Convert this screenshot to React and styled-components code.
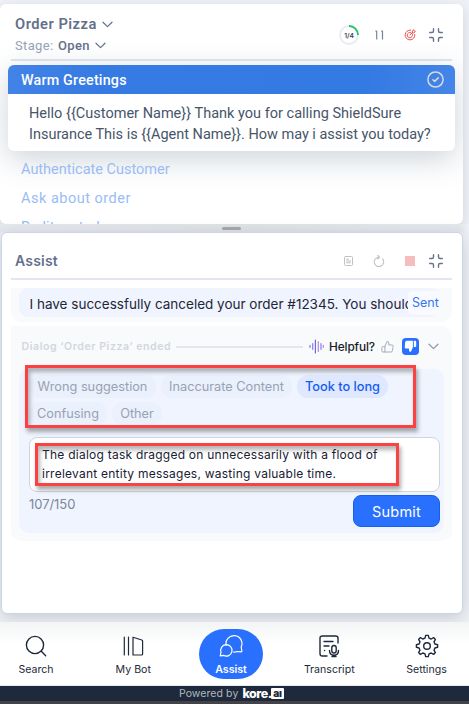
import React from "react";
import styled, { createGlobalStyle, css } from "styled-components";

const Global = createGlobalStyle`
  * { box-sizing: border-box; }
  body { margin: 0; background: #f1f3f8; font-family: Inter, "Liberation Sans", sans-serif; }
  button, textarea { font: inherit; margin: 0; }
  svg { display: block; flex: none; }
`;

const Page = styled.div`
  width: 469px;
  height: 704px;
  padding-top: 4px;
  display: flex;
  flex-direction: column;
  overflow: hidden;
  background: #f0f2f7;
`;

const PlaybookPanel = styled.section`
  width: 463px;
  height: 220px;
  flex: none;
  border-radius: 6px;
  background: #fff;
  overflow: hidden;
  box-shadow: 0 4px 14px rgba(71, 85, 105, 0.2);
  font-family: Roboto, sans-serif;
`;

const PlaybookHeader = styled.header`
  margin: 0 11px;
  height: 57px;
  padding: 10px 9px 0 4px;
  display: flex;
  justify-content: space-between;
  border-bottom: 2px solid #e2e6ec;
`;

const HeaderLine = styled.div`
  display: flex;
  align-items: center;
  gap: ${(p) => p.$gap}px;
  height: ${(p) => p.$height}px;
  color: #64748b;
`;

const PanelTitle = styled.h2`
  margin: 0;
  font: 600 ${(p) => p.$size || 14.5}px/18px ${(p) => p.$family || "Roboto"}, sans-serif;
  letter-spacing: ${(p) => p.$spacing || 0}px;
  color: #64708a;
`;

const Stage = styled.span`
  font-size: 13px;
  letter-spacing: 0.35px;
  color: #94a3b8;
  b { font-weight: 500; color: #64708a; margin-left: 1px; }
`;

const HeaderIcons = styled.div`
  display: flex;
  align-items: center;
  height: 40px;
  margin-top: ${(p) => p.$top || 0}px;
`;

const IconSlot = styled.span`
  display: flex;
  margin-left: ${(p) => p.$left || 0}px;
`;

const GreetingCard = styled.article`
  width: 447px;
  height: 86px;
  margin: 4px 0 0 8px;
  border-radius: 6px;
  background: #fff;
  box-shadow: 0 8px 30px rgba(71, 95, 120, 0.27);
  overflow: hidden;
`;

const GreetingTitle = styled.div`
  height: 29px;
  padding: 0 11px 0 13px;
  display: flex;
  align-items: center;
  justify-content: space-between;
  color: #fff;
  background: linear-gradient(100deg, #4283e7, #367be3 20%, #347ae3 80%, #4485e8);
  font-size: 14.3px;
  font-weight: 500;
  letter-spacing: 0.2px;
`;

const GreetingText = styled.p`
  margin: 0;
  padding: 9px 0 0 21px;
  font-size: 14.5px;
  line-height: 21px;
  letter-spacing: 0.01px;
  color: #475569;
  white-space: nowrap;
  span { display: block; }
  span + span { letter-spacing: -0.01px; }
`;

const StepList = styled.ul`
  margin: 0;
  padding: 4px 0 0 21px;
  list-style: none;
`;

const Step = styled.li`
  height: 29px;
  font-size: 14.5px;
  line-height: 29px;
  letter-spacing: ${(p) => p.$spacing}px;
  color: #9abcf4;
`;

const ResizeBar = styled.div`
  height: 8px;
  flex: none;
  display: flex;
  justify-content: center;
  align-items: center;
  padding-right: 6px;
  background: linear-gradient(90deg, #e6e8ee, #dfe2e6 50%, #e4e7ec 98%, #f0f2f7);
  &::before {
    content: "";
    width: 19px;
    height: 3px;
    border-radius: 2px;
    background: #a6a7ab;
  }
`;

const AssistPanel = styled.section`
  width: 462px;
  height: 382px;
  flex: none;
  margin-left: 0.5px;
  padding: 0 10px 0 9.5px;
  border: 1px solid #cbd5e5;
  border-radius: 6px;
  background: #fff;
  box-shadow: 0 4px 16px rgba(71, 85, 105, 0.25);
`;

const AssistHeader = styled.header`
  height: 47px;
  padding: 10px 9px 0 4px;
  display: flex;
  align-items: center;
  justify-content: space-between;
  border-bottom: 2px solid #e2e6ee;
`;

const MessageBlock = styled.div`
  margin-top: 8px;
  height: 34px;
  padding: 0 12px 5px 8px;
  border-radius: 0 0 11px 11px;
  background: #f8fafc;
`;

const Message = styled.div`
  height: 29px;
  padding-left: 10.5px;
  display: flex;
  align-items: center;
  border-radius: 9px;
  background: #eff4ff;
`;

const MessageText = styled.span`
  width: 378.5px;
  flex: none;
  overflow: hidden;
  white-space: nowrap;
  font-size: 13.5px;
  line-height: 20px;
  padding-top: 3px;
  color: #1e2638;
`;

const Sent = styled.span`
  height: 24px;
  flex: 1;
  padding-left: 4px;
  border-radius: 5px;
  background: #f8faff;
  color: #3576f3;
  font-size: 12.5px;
  line-height: 24px;
  white-space: nowrap;
`;

const Feedback = styled.div`
  height: 215px;
  margin-top: 4px;
  padding: 0 8px;
  border-radius: 2px 10px 10px 10px;
  background: #f8fafc;
`;

const FeedbackHeader = styled.div`
  height: 43px;
  padding: 0 5px 2px 2.5px;
  display: flex;
  align-items: center;
`;

const EndedLabel = styled.span`
  font-size: 10.6px;
  font-weight: 600;
  letter-spacing: 0.55px;
  color: #d2d7df;
  white-space: nowrap;
`;

const Rule = styled.span`
  flex: 1;
  height: 2px;
  margin: 0 6px 0 5px;
  background: #e2e6ed;
`;

const Helpful = styled.span`
  margin-left: 5px;
  width: 45px;
  font-size: 11.8px;
  letter-spacing: -0.1px;
  font-weight: 500;
  color: #171b25;
  white-space: nowrap;
`;

const Thumb = styled.button`
  width: 17px;
  height: 17px;
  padding: 0;
  display: grid;
  place-items: center;
  border: 0;
  border-radius: 4px;
  margin-left: ${(p) => p.$left}px;
  background: ${(p) => (p.$active ? "#2970ff" : "#fafbfd")};
`;

const Form = styled.div`
  position: relative;
  width: 425px;
  height: 164px;
  padding: 5.5px 4px 0 10px;
  border-radius: 10px;
  background: #eff4ff;
`;

const Chips = styled.div`
  display: flex;
  flex-wrap: wrap;
  gap: 4px 5px;
  width: 375px;
`;

const Chip = styled.button`
  height: 23px;
  width: ${(p) => p.$width}px;
  padding: 0;
  border: 0;
  border-radius: 12px;
  color: #98a2b3;
  background: #eaf0fc;
  font-size: 12.75px;
  line-height: 23px;
  white-space: nowrap;
  ${(p) =>
    p.$active &&
    css`
      color: #155eef;
      background: #dfe8ff;
      font-weight: 500;
    `}
`;

const Comment = styled.div`
  width: 411px;
  height: 55px;
  margin-top: 12.5px;
  padding: 7px 12px;
  border: 1px solid #d0d5dd;
  border-radius: 8px;
  background: #fff;
  color: #182033;
  font-size: 12px;
  line-height: 19px;
  white-space: nowrap;
  span { display: block; letter-spacing: 0.24px; }
`;

const FormFooter = styled.div`
  display: flex;
  justify-content: space-between;
  margin-top: 3px;
  width: 411px;
`;

const Counter = styled.span`
  font-size: 13px;
  line-height: 18px;
  letter-spacing: -0.05px;
  color: #7b879c;
`;

const Submit = styled.button`
  width: 87px;
  height: 32px;
  border: 1px solid #155eef;
  border-radius: 8px;
  background: #2970ff;
  color: #fff;
  font-size: 14.5px;
  letter-spacing: 0.25px;
`;

const Highlight = styled.div`
  position: absolute;
  left: ${(p) => p.$x}px;
  top: ${(p) => p.$y}px;
  width: ${(p) => p.$w}px;
  height: ${(p) => p.$h}px;
  border: 3px solid #fc4142;
  box-shadow: 2px 4px 4px rgba(70, 70, 70, 0.45), inset 2px 4px 4px rgba(70, 70, 70, 0.4);
  pointer-events: none;
`;

const Nav = styled.nav`
  height: 64px;
  margin-top: 8px;
  flex: none;
  position: relative;
  display: grid;
  grid-template-columns: 72px 122.5px 73px 123.5px 71px;
  padding: 7px 0 0 0;
  background: linear-gradient(#f3f4f5, #fff 22px);
  border-bottom: 1px solid #e6e9ee;
`;

const NavItem = styled.button`
  width: ${(p) => (p.$active ? 64 : 72)}px;
  height: 50px;
  padding: 5px 0 0;
  border: 0;
  justify-self: center;
  display: flex;
  flex-direction: column;
  align-items: center;
  justify-content: flex-start;
  gap: 4px;
  border-radius: 25px;
  background: ${(p) => (p.$active ? "#2970ff" : "transparent")};
  color: ${(p) => (p.$active ? "#fff" : "#1e293b")};
  font-size: 10.6px;
  font-weight: ${(p) => (p.$active ? 600 : 400)};
  line-height: 15px;
`;

const Footer = styled.footer`
  height: 18px;
  flex: none;
  display: flex;
  align-items: center;
  justify-content: center;
  padding-right: 6px;
  border-bottom: 3px solid #434246;
  background: #1e293b;
  color: #b1b7c1;
  font-size: 10.5px;
  line-height: 14px;
  letter-spacing: 0.08px;
`;

const Brand = styled.strong`
  display: flex;
  align-items: center;
  margin-left: 4px;
  font: 800 12.5px/14px Inter, sans-serif;
  letter-spacing: -0.5px;
  color: #fff;
`;

const BrandBadge = styled.span`
  height: 11px;
  width: 13px;
  margin: 0 0 1px -0.5px;
  border-radius: 1px;
  background: #fff;
  color: #1e293b;
  font: 900 10px/10px Inter, sans-serif;
  text-align: center;
  letter-spacing: -0.2px;
`;

function Icon({ size = 24, h, box = "0 0 24 24", color = "currentColor", sw = 1.5, children }) {
  return (
    <svg width={size} height={h || size} viewBox={box} fill="none" stroke={color} strokeWidth={sw} strokeLinecap="round" strokeLinejoin="round">
      {children}
    </svg>
  );
}

const Chevron = ({ color = "#64708a" }) => (
  <Icon size={11} h={7} box="0 0 11 7" color={color} sw={1.25}>
    <path d="M1 1.2 5.5 5.6 10 1.2" />
  </Icon>
);

const Collapse = () => (
  <Icon size={14} box="0 0 14 14" color="#66738b" sw={1.4}>
    <path d="M.7 4.5H3Q4.5 4.5 4.5 3V.7M9.5.7V3Q9.5 4.5 11 4.5h2.3M.7 9.5H3Q4.5 9.5 4.5 11v2.3M9.5 13.3V11Q9.5 9.5 11 9.5h2.3" />
  </Icon>
);

const ProgressText = styled.text`
  font: 600 6.6px Inter, sans-serif;
`;

const Progress = () => (
  <svg width="20" height="20" viewBox="0 0 20 20">
    <circle cx="10" cy="10" r="9" fill="#fff" stroke="#e8ebef" strokeWidth="1.8" />
    <path d="M10 1a9 9 0 0 1 9 9" fill="none" stroke="#20c45e" strokeWidth="1.8" />
    <ProgressText x="10" y="12.5" textAnchor="middle" fill="#344054">1/4</ProgressText>
  </svg>
);

const Target = () => (
  <Icon size={12} box="0 0 13 13" color="#ed4343" sw={1}>
    <path d="M7.2 1.2A5.3 5.3 0 1 0 11.8 6M7.1 3.8A2.9 2.9 0 1 0 9.2 6M6.4 6.6 9 4M9 4V2.1L10.6.8l.4 1.4 1.3.4L11 4Z" />
  </Icon>
);

const CheckBadge = () => (
  <Icon size={17} box="0 0 17 17" color="#d7d9dc" sw={1.5}>
    <circle cx="8.5" cy="8.5" r="7.6" />
    <path d="m5.9 8.7 1.8 1.7 3.5-3.5" />
  </Icon>
);

const Wave = () => (
  <Icon size={15} box="0 0 15 15" sw={1.2}>
    <path stroke="#8a7ce8" d="M1 6.3v2.2M3.7 4.5v5.8M12 4.7v5.6" />
    <path stroke="#6f66e9" d="M6.4 1v13" />
    <path stroke="#b389e8" d="M9.3 2.5v10M14.3 6.3v2.2" />
  </Icon>
);

export default function App() {
  return (
    <>
      <Global />
      <Page>
        <PlaybookPanel>
          <PlaybookHeader>
            <div>
              <HeaderLine $gap={2} $height={20}>
                <PanelTitle $size={14.7} $spacing={0.5}>Order Pizza</PanelTitle>
                <IconSlot $left={3}><Chevron /></IconSlot>
              </HeaderLine>
              <HeaderLine $gap={5} $height={23}>
                <Stage>Stage: <b>Open</b></Stage>
                <Chevron />
              </HeaderLine>
            </div>
            <HeaderIcons $top={1}>
              <Progress />
              <IconSlot $left={16}>
                <Icon size={9} h={10} box="0 0 9 10" color="#78849a" sw={1.2}>
                  <path d="M.7 1h1v8M6.5 1h1v8" />
                </Icon>
              </IconSlot>
              <IconSlot $left={20}><Target /></IconSlot>
              <IconSlot $left={13}><Collapse /></IconSlot>
            </HeaderIcons>
          </PlaybookHeader>
          <GreetingCard>
            <GreetingTitle>Warm Greetings<CheckBadge /></GreetingTitle>
            <GreetingText>
              <span>Hello {"{{Customer Name}}"} Thank you for calling ShieldSure</span>
              <span>Insurance This is {"{{Agent Name}}"}. How may i assist you today?</span>
            </GreetingText>
          </GreetingCard>
          <StepList>
            <Step $spacing={0}>Authenticate Customer</Step>
            <Step $spacing={0.5}>Ask about order</Step>
            <Step $spacing={0.1}>Reditposted</Step>
          </StepList>
        </PlaybookPanel>
        <ResizeBar />
        <AssistPanel>
          <AssistHeader>
            <PanelTitle $size={14} $family="Inter" $spacing={0.2}>Assist</PanelTitle>
            <HeaderIcons>
              <Icon size={9} h={10} box="0 0 9 10" color="#bfc1c6" sw={1}>
                <rect x=".5" y=".5" width="8" height="9" rx="1" />
                <path d="M2.5 3.2h2M2.5 5h4M2.5 6.8h4" />
              </Icon>
              <IconSlot $left={20}>
                <Icon size={12} box="0 0 12 12" color="#bfc1c6" sw={1.1}>
                  <path d="M9.5 3.8A4.7 4.7 0 1 1 6 2.2M4.8.5 6.6 2.2 4.8 4" />
                </Icon>
              </IconSlot>
              <IconSlot $left={20}>
                <svg width="10" height="10"><rect width="10" height="10" fill="#f5bdbd" /></svg>
              </IconSlot>
              <IconSlot $left={14}><Collapse /></IconSlot>
            </HeaderIcons>
          </AssistHeader>
          <MessageBlock>
            <Message>
              <MessageText>I have successfully canceled your order #12345. You should</MessageText>
              <Sent>Sent</Sent>
            </Message>
          </MessageBlock>
          <Feedback>
            <FeedbackHeader>
              <EndedLabel>Dialog ‘Order Pizza’ ended</EndedLabel>
              <Rule />
              <Wave />
              <Helpful>Helpful?</Helpful>
              <Thumb $left={4.5}>
                <Icon size={13} box="0 0 12 12" color="#a3abb9" sw={0.9}>
                  <path d="M3.6 6 5.6 1.3Q7.2 1 7.2 2.6V4.6h2.9q1.3.1 1.1 1.3l-.6 3.9q-.2 1.3-1.3 1.3H1.8Q.8 11.1.8 10.1V7Q.8 6 1.7 6ZM3.6 6v5" />
                </Icon>
              </Thumb>
              <Thumb $active $left={6}>
                <svg width="13" height="13" viewBox="0 0 13 13">
                  <path fill="#fff" d="M2.8.8H8.9V7.2L6.9 11.7Q5 12 5 10.2V8.4H2Q.5 8.3.7 6.9L1.2 2.2Q1.5.8 2.8.8ZM9.8.8h1.3q1.1.1 1.1 1.1v4q0 1.1-1.1 1.1H9.8Z" />
                </svg>
              </Thumb>
              <IconSlot $left={9}><Chevron color="#8d99ac" /></IconSlot>
            </FeedbackHeader>
            <Form>
              <Chips>
                <Chip $width={127}>Wrong suggestion</Chip>
                <Chip $width={131}>Inaccurate Content</Chip>
                <Chip $width={91} $active>Took to long</Chip>
                <Chip $width={78}>Confusing</Chip>
                <Chip $width={50}>Other</Chip>
              </Chips>
              <Comment>
                <span>The dialog task dragged on unnecessarily with a flood of</span>
                <span>irrelevant entity messages, wasting valuable time.</span>
              </Comment>
              <FormFooter>
                <Counter>107/150</Counter>
                <Submit>Submit</Submit>
              </FormFooter>
              <Highlight $x={6} $y={-4} $w={391} $h={63} />
              <Highlight $x={16} $y={74} $w={364} $h={43} />
            </Form>
          </Feedback>
        </AssistPanel>
        <Nav>
          <NavItem>
            <Icon sw={1.4}><circle cx="11" cy="11" r="8.6" /><path d="m17.3 17.3 4.4 4.4" /></Icon>
            Search
          </NavItem>
          <NavItem>
            <Icon sw={1.2}><path d="M3.3 3v18M7.5 3v18M12 3.2 20.8 6q.8.2.8 1v13q0 1-1 1H12Z" /></Icon>
            My Bot
          </NavItem>
          <NavItem $active>
            <Icon sw={1.2}>
              <path d="M7.2 11.5A8 8 0 1 1 22.2 13l.6 4q.1 1-.8.9l-4-.4q-1.7.8-3.6.5" />
              <path d="M1.2 21.8 2 18.4A5.7 5.7 0 1 1 4.6 21.4Z" />
            </Icon>
            Assist
          </NavItem>
          <NavItem>
            <Icon sw={1.4}>
              <path d="M10 22H5.5Q3 22 3 19.5V4Q3 2 5.5 2h13Q21 2 21 4v5M7 7.5h9M7 12h5M7.5 16.5h.1" />
              <rect x="14.8" y="11.5" width="4.4" height="7.5" rx="2.2" />
              <path d="M12.5 16.5q0 4.7 4.5 4.7t4.5-4.7M17 21v1.5M15 22.5h4" />
            </Icon>
            Transcript
          </NavItem>
          <NavItem>
            <Icon sw={1.4}>
              <circle cx="12" cy="12" r="3.3" />
              <path d="M10.7 1.4h2.6l.7 2.7 2.2.9 2.4-1.4 1.8 1.8L19 7.8l.9 2.2 2.7.7v2.6l-2.7.7-.9 2.2 1.4 2.4-1.8 1.8-2.4-1.4-2.2.9-.7 2.7h-2.6l-.7-2.7-2.2-.9-2.4 1.4-1.8-1.8L5 16.2 4.1 14l-2.7-.7v-2.6l2.7-.7L5 7.8 3.6 5.4l1.8-1.8L7.8 5l2.2-.9Z" />
            </Icon>
            Settings
          </NavItem>
        </Nav>
        <Footer>
          Powered by
          <Brand>kore.<BrandBadge>aı</BrandBadge></Brand>
        </Footer>
      </Page>
    </>
  );
}
